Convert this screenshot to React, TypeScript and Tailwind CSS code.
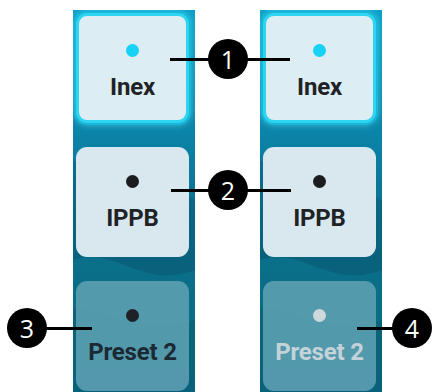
import React from "react";

type Preset = {
  label: string;
  dot: string;
  card: string;
  text: string;
};

const left: Preset[] = [
  { label: "Inex", dot: "bg-[#16d2f4]", card: "bg-[#dcedf4] border-[3px] border-[#2fd4f1] shadow-[0_0_0_2px_#18b7da,0_0_8px_#5fe3f7]", text: "text-[#1f2326]" },
  { label: "IPPB", dot: "bg-[#1b1c1e]", card: "bg-[#d8e8ee]", text: "text-[#1f2326]" },
  { label: "Preset 2", dot: "bg-[#1e2125]", card: "bg-[#5c9fb1]/90", text: "text-[#1b2933]" },
];

const right: Preset[] = [
  left[0],
  left[1],
  { label: "Preset 2", dot: "bg-[#cdd8db]", card: "bg-[#5c9fb1]/90", text: "text-[#c3d3d8]" },
];

function Strip({ items }: { items: Preset[] }) {
  return (
    <div className="relative h-[382px] w-[122px] overflow-hidden bg-[linear-gradient(180deg,#0a9fc6_0%,#0b86ab_30%,#0b6f8e_55%,#0b6680_75%,#0c5f78_100%)]">
      <svg className="absolute inset-0 size-full" viewBox="0 0 122 382" preserveAspectRatio="none" aria-hidden="true">
        <path d="M0 150 C30 170 50 140 80 175 C100 195 110 180 122 190 L122 382 L0 382 Z" fill="#07526a" opacity=".35" />
        <path d="M0 250 C40 235 70 280 122 260 L122 382 L0 382 Z" fill="#0d8aa3" opacity=".35" />
        <path d="M0 300 C20 290 60 330 122 310 L122 382 L0 382 Z" fill="#0a4f66" opacity=".3" />
      </svg>
      <div className="relative flex flex-col gap-6 pl-[3px] pr-[6px] pt-[3px]">
        {items.map((p, i) => (
          <div key={i} className={`flex h-[110px] flex-col items-center rounded-[11px] ${p.card}`}>
            <div className={`mt-[28px] size-[13px] shrink-0 rounded-full ${p.dot}`} />
            <div className={`mt-[18px] text-[24px] font-bold leading-none tracking-[-0.2px] ${p.text}`}>{p.label}</div>
          </div>
        ))}
      </div>
    </div>
  );
}

function Callout({ n, x, y, from, to }: { n: number; x: number; y: number; from: number; to: number }) {
  return (
    <>
      <div className="absolute h-[3px] bg-black" style={{ left: from, top: y - 1, width: to - from }} />
      <div
        className="absolute flex size-[40px] -translate-x-1/2 -translate-y-1/2 items-center justify-center rounded-full bg-black text-[25px] leading-none text-white"
        style={{ left: x, top: y, fontFamily: "'Open Sans', 'Liberation Sans', sans-serif" }}
      >
        {n}
      </div>
    </>
  );
}

export default function App() {
  return (
    <div className="relative h-[392px] w-[432px] overflow-hidden bg-white" style={{ fontFamily: "Roboto, 'Liberation Sans', sans-serif" }}>
      <div className="flex gap-[65px] pl-[73px] pt-[10px]">
        <Strip items={left} />
        <Strip items={right} />
      </div>
      <Callout n={1} x={228} y={59} from={170} to={290} />
      <Callout n={2} x={228} y={190} from={171} to={291} />
      <Callout n={3} x={27} y={328} from={30} to={92} />
      <Callout n={4} x={412} y={328} from={357} to={400} />
    </div>
  );
}
